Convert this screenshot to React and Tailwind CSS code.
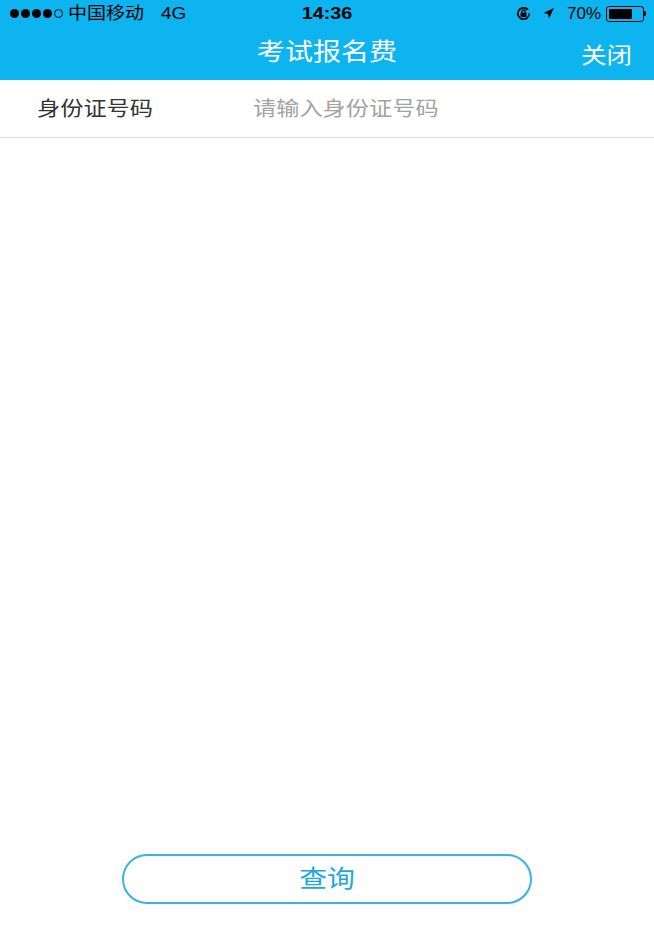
import { Navigation } from "lucide-react";

const font = { fontFamily: '"Helvetica Neue", "Liberation Sans", "Noto Sans CJK SC", sans-serif' };

const StatusBar = () => (
  <div className="h-[27px] flex items-center justify-between pl-[10px] pr-[8px] text-[17px] text-black relative">
    <div className="flex items-center">
      <span className="flex items-center gap-[2px]">
        <span className="w-[9px] h-[9px] rounded-full bg-black" />
        <span className="w-[9px] h-[9px] rounded-full bg-black" />
        <span className="w-[9px] h-[9px] rounded-full bg-black" />
        <span className="w-[9px] h-[9px] rounded-full bg-black" />
        <span className="w-[9px] h-[9px] rounded-full border border-black" />
      </span>
      <span className="ml-[5px] inline-block w-[76px] whitespace-nowrap origin-left scale-x-[1.12]">中国移动</span>
      <span className="ml-[17px] inline-block origin-left scale-x-[1.12]">4G</span>
    </div>
    <div className="absolute left-1/2 -translate-x-1/2 font-bold scale-x-[1.16]">14:36</div>
    <div className="flex items-center">
      {/* rotation lock */}
      <svg width="17" height="17" viewBox="0 0 17 17" className="mr-[10px]">
        <path d="M14.2 8.5a5.7 5.7 0 1 1-2.1-4.4" fill="none" stroke="black" strokeWidth="1.7" />
        <path d="M11 2.2l3 2.2-3.5 1z" fill="black" />
        <rect x="5.6" y="7.6" width="5.8" height="4.4" rx="0.6" fill="black" />
        <path d="M6.9 7.6V6.4a1.6 1.6 0 0 1 3.2 0v1.2" fill="none" stroke="black" strokeWidth="1.2" />
      </svg>
      <Navigation className="w-[13px] h-[13px] mr-[12px]" fill="black" strokeWidth={0} />
      <span>70%</span>
      <span className="ml-[5px] flex items-center">
        <span className="w-[38px] h-[16px] border border-black rounded-[3px] p-[2px] flex">
          <span className="w-[72%] h-full bg-black rounded-[1px]" />
        </span>
        <span className="w-[2px] h-[5px] bg-black rounded-r-sm" />
      </span>
    </div>
  </div>
);

export default function App() {
  return (
    <div className="w-[654px] h-[930px] bg-white flex flex-col relative overflow-hidden" style={font}>
      <div className="bg-[#0db4f0] relative">
        <StatusBar />
        <div className="h-[53px] relative flex items-center justify-center text-white">
          <span className="text-[24px] -mt-[4px] inline-block scale-x-[1.17]">考试报名费</span>
          <span className="absolute right-[22px] top-[12px] text-[22px] inline-block origin-right scale-x-[1.16]">关闭</span>
        </div>
      </div>

      <div className="h-[58px] flex items-center border-b border-[#dcdcdc] text-[20px] overflow-hidden">
        <span className="w-[253px] shrink-0 pl-[37px]">
          <span className="inline-block origin-left scale-x-[1.16] text-[#333333]">身份证号码</span>
        </span>
        <input
          className="flex-1 min-w-0 outline-none bg-transparent origin-left scale-x-[1.16] text-[#333333] placeholder:text-[#a3a3a3]"
          placeholder="请输入身份证号码"
        />
      </div>

      <div className="flex-1" />

      <div className="flex justify-center pb-[26px]">
        <button className="w-[410px] h-[50px] rounded-full border-2 border-[#35b2e6] text-[#1ea6de] text-[24px]">
          <span className="inline-block scale-x-[1.16]">查询</span>
        </button>
      </div>
    </div>
  );
}
